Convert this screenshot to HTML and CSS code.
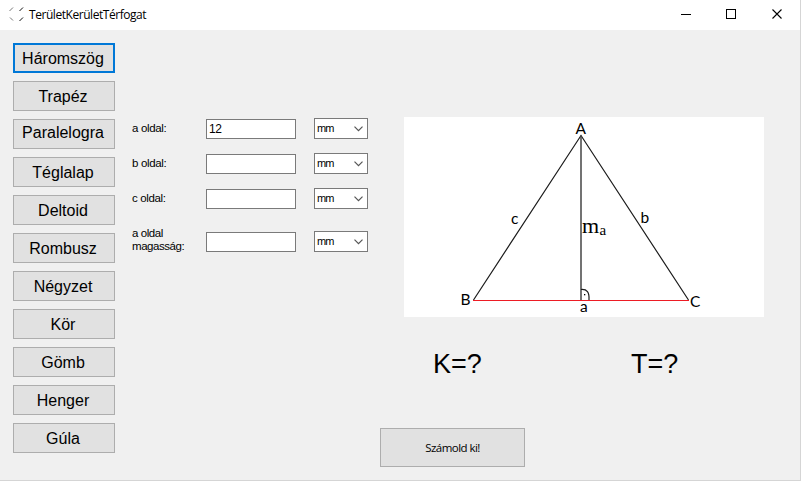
FILE: index.html
```html
<!DOCTYPE html>
<html lang="hu">
<head>
<meta charset="utf-8">
<title>TerületKerületTérfogat</title>
<link rel="stylesheet" href="styles.css">
</head>
<body>
<div class="window">
  <header class="titlebar">
    <svg class="app-icon" width="16" height="16" viewBox="0 0 16 16" fill="none">
      <path d="M0.500 4L4 .5M1 10.500L4 13.500" stroke="#777"/>
      <path d="M10.500 4L14 .5M10.500 14L14 10.500" stroke="#111"/>
    </svg>
    <h1 class="title">TerületKerületTérfogat</h1>
    <svg class="controls" width="108" height="12" viewBox="0 0 108 12" fill="none" stroke="#000" shape-rendering="crispEdges">
      <path d="M0 5.5H10"/>
      <rect x="45.5" y=".5" width="9" height="9"/>
      <path d="M91.500 .5L100.500 9.500M100.500 .5L91.500 9.500" shape-rendering="auto" stroke-width="1.1"/>
    </svg>
  </header>
  <main class="content">
    <nav class="shapes">
      <button class="btn active">Háromszög</button>
      <button class="btn">Trapéz</button>
      <button class="btn clipped">Paralelogra</button>
      <button class="btn">Téglalap</button>
      <button class="btn">Deltoid</button>
      <button class="btn">Rombusz</button>
      <button class="btn">Négyzet</button>
      <button class="btn">Kör</button>
      <button class="btn">Gömb</button>
      <button class="btn">Henger</button>
      <button class="btn">Gúla</button>
    </nav>
    <section class="work">
      <div class="top">
        <form class="fields">
          <div class="row"><label class="label">a oldal:</label><span class="input">12</span><span class="combo">mm<svg class="chevron" width="9" height="6" viewBox="0 0 9 6"><path d="M.5 .7L4.500 4.700L8.500 .7"/></svg></span></div>
          <div class="row"><label class="label">b oldal:</label><span class="input"></span><span class="combo">mm<svg class="chevron" width="9" height="6" viewBox="0 0 9 6"><path d="M.5 .7L4.500 4.700L8.500 .7"/></svg></span></div>
          <div class="row"><label class="label">c oldal:</label><span class="input"></span><span class="combo">mm<svg class="chevron" width="9" height="6" viewBox="0 0 9 6"><path d="M.5 .7L4.500 4.700L8.500 .7"/></svg></span></div>
          <div class="row tall"><label class="label">a oldal<br>magasság:</label><span class="input"></span><span class="combo">mm<svg class="chevron" width="9" height="6" viewBox="0 0 9 6"><path d="M.5 .7L4.500 4.700L8.500 .7"/></svg></span></div>
        </form>
        <div class="result">
          <svg class="figure" width="360" height="200" viewBox="0 0 360 200">
            <rect width="360" height="200" fill="#fff"/>
            <g fill="none" stroke="#1c1c1c" stroke-width="1.2">
              <path d="M69.500 183L177 18.500L284.500 183"/>
              <path d="M177 18.500V183" stroke="#444" stroke-width="1.5"/>
              <path d="M177 172.500C183 172 185.500 175 185 183"/>
            </g>
            <rect x="180" y="177" width="1.300" height="1.300"/>
            <path d="M69 183.500H285" stroke="#ed1c24" stroke-width="1.2"/>
            <g class="vertex">
              <text x="171.500" y="17">A</text>
              <text x="56.500" y="188">B</text>
              <text x="286" y="190">C</text>
              <text x="176" y="195">a</text>
              <text x="236.500" y="106">b</text>
              <text x="107" y="107">c</text>
            </g>
            <text class="height" x="178" y="116">m</text>
            <text class="height-sub" x="195.500" y="117.500">a</text>
          </svg>
          <div class="answers"><span>K=?</span><span>T=?</span></div>
        </div>
      </div>
      <button class="btn submit">Számold ki!</button>
    </section>
  </main>
</div>
</body>
</html>
```
FILE: styles.css
```css
* { box-sizing: border-box; }
body { margin: 0; font-family: "Liberation Sans", Arial, sans-serif; color: #000; }
.window { width: 801px; height: 481px; overflow: hidden; display: flex; flex-direction: column; background: #f0f0f0; border: solid #d5d5d5; border-width: 0 1px 1px 0; }
.titlebar { height: 30px; flex: none; display: flex; align-items: center; padding: 0 14px 0 9px; background: #fff; }
.app-icon { flex: none; margin-right: 4px; }
.title { margin: 0; flex: 1; font: 400 12px/16px "Open Sans", "Noto Sans", sans-serif; letter-spacing: -0.45px; }
.controls { flex: none; margin-right: -3px; }
.content { flex: 1; display: flex; padding: 13px 0 0 13px; }
.shapes { width: 102px; display: flex; flex-direction: column; gap: 8px; }
.btn { display: flex; align-items: center; justify-content: center; width: 102px; height: 30px; flex: none; padding: 1px 2px 0 0; border: 1px solid #adadad; background: #e1e1e1; color: #000; font: 16px/18px "Liberation Sans", Arial, sans-serif; }
.btn.active { border: 2px solid #0078d7; }
.btn.clipped { padding-bottom: 4px; }
.work { width: 650px; padding: 74px 0 0 17px; display: flex; flex-direction: column; }
.top { display: flex; gap: 36px; height: 311px; }
.fields { width: 236px; padding-top: 1px; display: flex; flex-direction: column; gap: 14px; }
.row { display: flex; height: 21px; align-items: center; font-size: 11px; line-height: 13px; }
.row.tall { margin-top: 8px; }
.label { width: 74px; margin-top: -1px; font-size: 11.5px; letter-spacing: -0.35px; }
.row.tall .label { margin-top: -4px; letter-spacing: -0.45px; }
.input { width: 90px; height: 20px; margin: 1px 18px 0 0; padding: 3px 2px; border: 1px solid #7a7a7a; background: #fff; font-size: 12px; line-height: 12px; letter-spacing: -0.3px; }
.combo { width: 54px; height: 21px; padding: 0 4px 0 2px; display: flex; align-items: center; justify-content: space-between; border: 1px solid #7a7a7a; background: #fff; letter-spacing: -1px; }
.chevron path { fill: none; stroke: #555; stroke-width: 1.2; }
.result { width: 360px; }
.figure { display: block; }
.vertex { font: 15.5px Lato, "Open Sans", sans-serif; }
.height { font: 22px "Liberation Serif", serif; }
.height-sub { font: 15px "Liberation Serif", serif; }
.answers { display: grid; grid-template-columns: 198px 1fr; padding: 32px 0 0 29px; font-size: 27px; line-height: 31px; }
.submit { width: 145px; height: 39px; margin-left: 248px; padding: 0; font: 11.5px/16px "Open Sans", "Noto Sans", sans-serif; letter-spacing: -0.55px; }
```
